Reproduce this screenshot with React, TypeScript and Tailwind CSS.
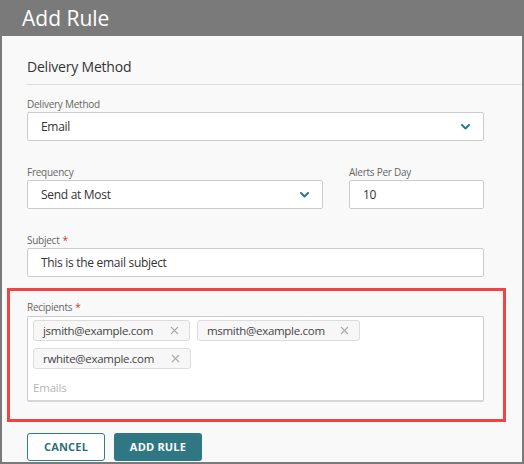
import React from "react";

const Chevron = () => (
  <svg width="9" height="6" viewBox="0 0 9 6" fill="none">
    <polyline points="1,1 4.5,4.5 8,1" stroke="#2a7d88" strokeWidth="2" strokeLinecap="round" strokeLinejoin="round" />
  </svg>
);

const Label = ({ children, req }: { children: React.ReactNode; req?: boolean }) => (
  <div className="h-[14px] text-[10px] leading-[14px] tracking-[-0.25px] text-[#666]">
    {children}
    {req && <span className="text-[#c0392b] ml-[3px]">*</span>}
  </div>
);

const Chip = ({ text, w }: { text: string; w: string }) => (
  <div className={`${w} h-[21px] flex items-center justify-between pl-[9px] pr-[10px] bg-[#f7f7f7] border border-[#dcdcdc] rounded-[3px] text-[11.5px] tracking-[-0.3px] text-[#444]`}>
    <span>{text}</span>
    <svg width="9" height="9" viewBox="0 0 9 9">
      <path d="M1 1 L8 8 M8 1 L1 8" stroke="#aaa" strokeWidth="1.1" />
    </svg>
  </div>
);

const inputCls =
  "mt-[1px] h-[29px] bg-white border border-[#cccccc] rounded-[2px] flex items-center pl-[13px] text-[12px] tracking-[-0.3px] text-[#333]";

export default function App() {
  return (
    <div className="w-[524px] h-[464px] bg-[#f9f9f9] flex flex-col overflow-hidden" style={{ fontFamily: '"Open Sans", "Liberation Sans", sans-serif' }}>
      <div className="h-[36px] shrink-0 bg-[#7a7a7a] pl-[22px] flex items-center">
        <span className="text-white text-[21px] leading-none">Add Rule</span>
      </div>
      <div className="flex-1 border-l-2 border-r-2 border-b-2 border-[#7a7a7a] pl-[25px] flex flex-col">
        <div className="pt-[21px] pb-[7px] border-b border-[#dddddd] h-[49px]">
          <div className="text-[14px] leading-[20px] tracking-[-0.2px] text-[#333]">Delivery Method</div>
        </div>
        <div className="w-[457px] flex flex-col">
          <div className="mt-[12px]">
            <Label>Delivery Method</Label>
            <div className={`${inputCls} justify-between pr-[13px]`}>
              <span>Email</span>
              <Chevron />
            </div>
          </div>
          <div className="mt-[24px] flex gap-[26px]">
            <div className="w-[296px]">
              <Label>Frequency</Label>
              <div className={`${inputCls} justify-between pr-[13px]`}>
                <span>Send at Most</span>
                <Chevron />
              </div>
            </div>
            <div className="flex-1">
              <Label>Alerts Per Day</Label>
              <div className={inputCls}>10</div>
            </div>
          </div>
          <div className="mt-[24px]">
            <Label req>Subject</Label>
            <div className={inputCls}>This is the email subject</div>
          </div>
          <div className="mt-[11px] ml-[-20px] w-[499px] border-[3px] border-[#f24343] pl-[17px] pr-[19px] pt-[9px] pb-[17px]">
            <Label req>Recipients</Label>
            <div className="mt-[2px] h-[86px] bg-white border border-[#cccccc] border-b-2 border-b-[#d6d6d6] rounded-[2px] pl-[5px] pt-[3px]">
              <div className="flex gap-[7px]">
                <Chip text="jsmith@example.com" w="w-[157px]" />
                <Chip text="msmith@example.com" w="w-[163px]" />
              </div>
              <div className="flex mt-[7px]">
                <Chip text="rwhite@example.com" w="w-[158px]" />
              </div>
              <div className="mt-[11px] text-[11.5px] leading-[16px] tracking-[-0.2px] text-[#b5b5b5]">Emails</div>
            </div>
          </div>
          <div className="mt-[11px] flex gap-[9px]">
            <div className="w-[78px] h-[28px] border-[1.5px] border-[#2e7d87] rounded-[3px] bg-white flex items-center justify-center text-[11px] font-bold tracking-[0.2px] text-[#2e6f78]">
              CANCEL
            </div>
            <div className="w-[88px] h-[28px] rounded-[3px] bg-[#2f7883] flex items-center justify-center text-[11px] font-bold tracking-[0.2px] text-white">
              ADD RULE
            </div>
          </div>
        </div>
      </div>
    </div>
  );
}
